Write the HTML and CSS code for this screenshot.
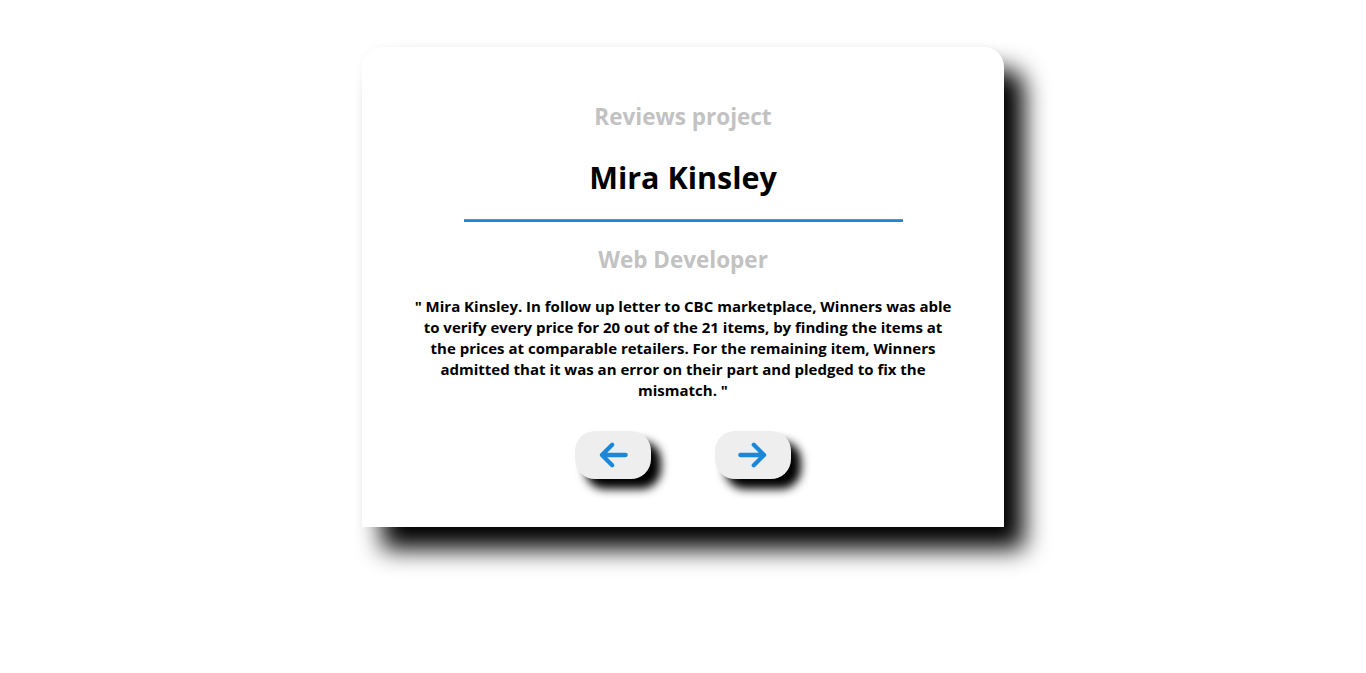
FILE: index.html
```html
<!DOCTYPE html>
<html lang="en">
<head>
<meta charset="utf-8">
<title>Reviews project</title>
<link rel="stylesheet" href="styles.css">
</head>
<body>
<main class="card">
  <h2 class="project">Reviews project</h2>
  <h1 class="name">Mira Kinsley</h1>
  <div class="rule"></div>
  <h2 class="job">Web Developer</h2>
  <p class="quote">" Mira Kinsley. In follow up letter to CBC marketplace, Winners was able to verify every price for 20 out of the 21 items, by finding the items at the prices at comparable retailers. For the remaining item, Winners admitted that it was an error on their part and pledged to fix the mismatch. "</p>
  <div class="nav">
    <button class="btn" aria-label="Previous">
      <svg width="38" height="38" viewBox="0 0 24 24"><path d="M20 12H5M11.5 5.5L5 12l6.5 6.5" fill="none" stroke="#1b87d8" stroke-width="2.7" stroke-linecap="round" stroke-linejoin="round"/></svg>
    </button>
    <button class="btn" aria-label="Next">
      <svg width="38" height="38" viewBox="0 0 24 24"><path d="M4 12h15M12.5 5.5L19 12l-6.5 6.5" fill="none" stroke="#1b87d8" stroke-width="2.7" stroke-linecap="round" stroke-linejoin="round"/></svg>
    </button>
  </div>
</main>
</body>
</html>
```
FILE: styles.css
```css
* { box-sizing: border-box; }
html, body { min-height: 100%; }
body {
  margin: 0;
  min-height: 673px;
  padding-top: 47px;
  background: #fff;
  font-family: "Open Sans", "Noto Sans", sans-serif;
}
.card {
  width: 642px;
  height: 480px;
  margin: 0 auto;
  background: #fff;
  border-radius: 20px 20px 0 0;
  box-shadow: 20px 22px 25px #000, 0 0 8px rgba(0,0,0,0.03);
  display: flex;
  flex-direction: column;
  align-items: center;
  padding: 54px 50px 0;
  text-align: center;
}
.project, .job {
  margin: 0;
  font-size: 22.5px;
  font-weight: 700;
  color: #c2c2c2;
  line-height: 32px;
}
.name {
  margin: 22px 0 0;
  font-size: 30.5px;
  font-weight: 700;
  color: #000;
  line-height: 44px;
}
.rule {
  width: 439px;
  height: 3px;
  margin-top: 20px;
  border-top: 1px solid #8a8a8a;
  background: #1b87d8;
}
.job { margin-top: 22px; }
.quote {
  margin: 20px 0 0;
  font-size: 15px;
  font-weight: 700;
  line-height: 21px;
  color: #000;
}
.nav {
  display: flex;
  gap: 64px;
  margin-top: 30px;
}
.btn {
  width: 76px;
  height: 48px;
  border: none;
  border-radius: 20px;
  background: #eeeeee;
  box-shadow: 10px 10px 10px #000;
  display: flex;
  align-items: center;
  justify-content: center;
  padding: 0;
}
```
